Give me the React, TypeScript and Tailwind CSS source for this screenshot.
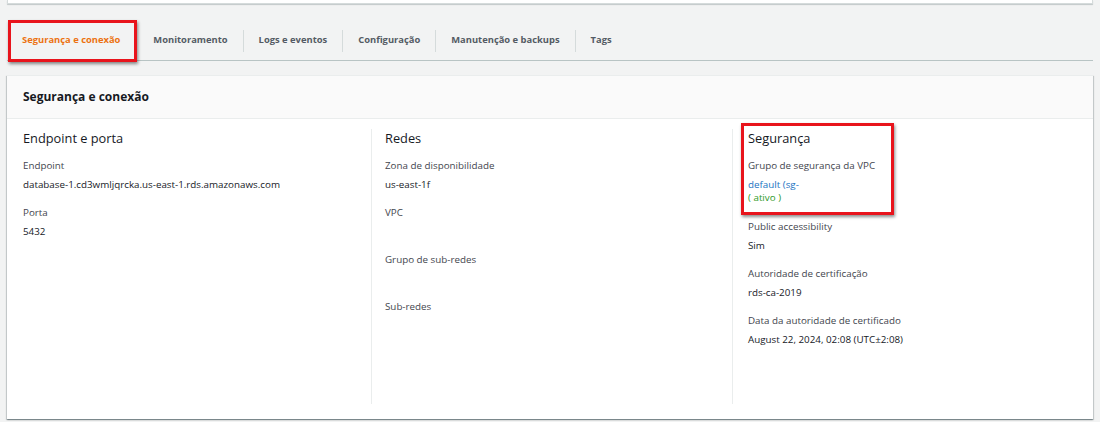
import React from 'react';

interface Field {
    label: string;
    value?: React.ReactNode;
}

const tabs = [
    'Segurança e conexão',
    'Monitoramento',
    'Logs e eventos',
    'Configuração',
    'Manutenção e backups',
    'Tags',
];

const FieldBlock: React.FC<Field> = ({ label, value }) => (
    <div className="mb-[14px]">
        <div className="text-[9.8px] leading-[16px] text-[#3f454e]">{label}</div>
        <div className="mt-[4px] text-[9.8px] leading-[13px] text-[#16191f] min-h-[13px]">{value}</div>
    </div>
);

const ColumnTitle: React.FC<{ children: React.ReactNode }> = ({ children }) => (
    <h3 className="text-[12.8px] leading-[18px] text-[#16191f] mb-[11px]">{children}</h3>
);

const App: React.FC = () => {
    return (
        <div
            className="w-[1100px] h-[422px] overflow-hidden bg-[#f2f3f3] px-[7px]"
            style={{ fontFamily: '"Open Sans", "Liberation Sans", sans-serif' }}
        >
            {/* card above, cut off */}
            <div className="h-[4px] bg-white border-x border-b border-[#d5dbdb] shadow-[0_1px_1px_0_rgba(0,28,36,0.2)]" />

            {/* Tabs */}
            <div className="mt-[17px] h-[40px] border-b border-[#b8c4c4] flex items-center">
                {tabs.map((tab, i) => {
                    const active = i === 0;
                    return (
                        <React.Fragment key={tab}>
                            {i > 0 && (
                                <span className={`w-px h-[22px] ${i === 1 ? 'bg-transparent' : 'bg-[#d5dbdb]'}`} />
                            )}
                            <div className={`relative h-full flex items-center ${active ? 'pl-[15px] pr-[17px]' : 'px-[15px]'}`}>
                                <span
                                    className={`text-[9.4px] font-bold whitespace-nowrap ${active ? 'text-[#ec7211]' : 'text-[#545b64]'}`}
                                >
                                    {tab}
                                </span>
                                {active && (
                                    <div className="absolute left-[1px] right-0 top-[-1px] bottom-[-2px] border-[3px] border-[#e8141c] shadow-[1px_2px_3px_rgba(0,0,0,0.45)]" />
                                )}
                            </div>
                        </React.Fragment>
                    );
                })}
            </div>

            {/* Card */}
            <div className="mt-[14px] bg-white border-t border-[#eaeded] shadow-[0_1px_1px_0_rgba(0,28,36,0.3),1px_1px_1px_0_rgba(0,28,36,0.15),-1px_1px_1px_0_rgba(0,28,36,0.15)]">
                <div className="h-[43px] bg-[#fafafa] border-b border-[#eaeded] px-[16px] flex items-center">
                    <h2 className="text-[12px] font-bold text-[#16191f]">Segurança e conexão</h2>
                </div>
                <div className="grid grid-cols-[348px_361px_1fr] px-[16px] pt-[10px] pb-[15px]">
                    <div className="min-h-[275px]">
                        <ColumnTitle>Endpoint e porta</ColumnTitle>
                        <FieldBlock label="Endpoint" value="database-1.cd3wmljqrcka.us-east-1.rds.amazonaws.com" />
                        <FieldBlock label="Porta" value="5432" />
                    </div>
                    <div className="border-l border-[#eaeded] pl-[13px]">
                        <ColumnTitle>Redes</ColumnTitle>
                        <FieldBlock label="Zona de disponibilidade" value="us-east-1f" />
                        <FieldBlock label="VPC" />
                        <FieldBlock label="Grupo de sub-redes" />
                        <FieldBlock label="Sub-redes" />
                    </div>
                    <div className="relative border-l border-[#eaeded] pl-[15px]">
                        <ColumnTitle>Segurança</ColumnTitle>
                        <FieldBlock
                            label="Grupo de segurança da VPC"
                            value={
                                <>
                                    <div className="text-[#1a73c2]">default (sg-</div>
                                    <div className="text-[#2f9a2a]">( ativo )</div>
                                </>
                            }
                        />
                        <div className="h-[1px]" />
                        <FieldBlock label="Public accessibility" value="Sim" />
                        <FieldBlock label="Autoridade de certificação" value="rds-ca-2019" />
                        <FieldBlock label="Data da autoridade de certificado" value="August 22, 2024, 02:08 (UTC±2:08)" />
                        <div className="absolute left-[8px] top-[-6px] w-[153px] h-[92px] border-[3px] border-[#e8141c] shadow-[1px_2px_3px_rgba(0,0,0,0.45)]" />
                    </div>
                </div>
            </div>
        </div>
    );
};

export default App;
